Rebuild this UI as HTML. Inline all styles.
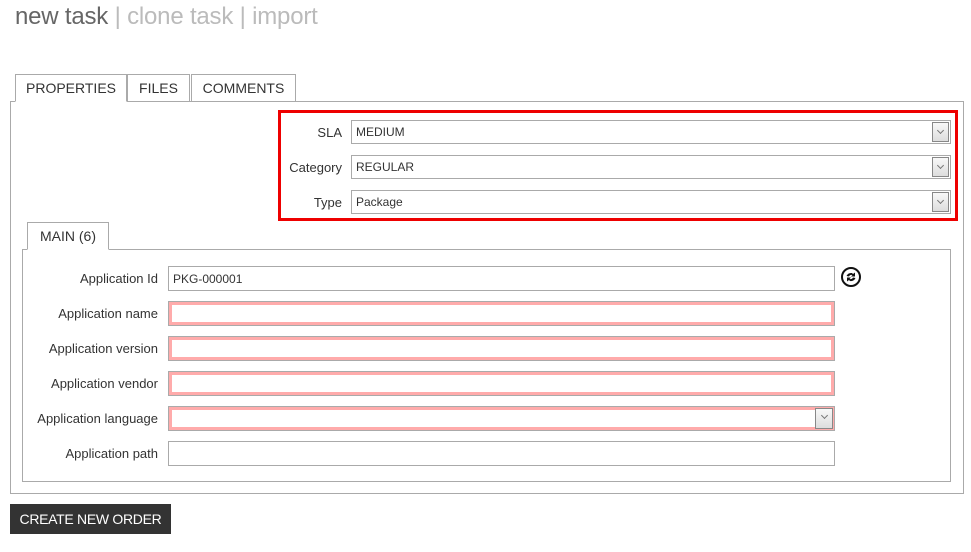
<!DOCTYPE html>
<html><head><style>
*{box-sizing:border-box;margin:0;padding:0}
body{width:971px;height:552px;background:#fff;font-family:"Liberation Sans",sans-serif;position:relative;overflow:hidden;color:#333}
.a{position:absolute}
.title{left:15px;top:3px;font-size:24px;color:#bbb;letter-spacing:-0.2px}
.title b{font-weight:normal;color:#666}
.tab{position:absolute;border:1px solid #aaa;font-size:14px;text-align:center;line-height:26px;background:#fff;color:#333}
.panel{border:1px solid #aaa}
.lbl{position:absolute;font-size:13px;text-align:right;color:#333}
.sel{position:absolute;border:1px solid #aaa;height:24px;font-size:12px;line-height:23px;padding-left:4px;background:#fff}
.sel i{position:absolute;right:1px;top:1px;width:17px;height:20px;border:1px solid #888;background:linear-gradient(#f8f8f8,#ddd)}
.sel i:after{content:"";position:absolute;left:5px;top:5px;width:4px;height:4px;border-right:1px solid #777;border-bottom:1px solid #777;transform:rotate(45deg)}
.inp{position:absolute;border:1px solid #aaa;height:25px;left:168px;width:667px;font-size:12px;line-height:24px;padding-left:4px;background:#fff}
.pk{box-shadow:inset 0 0 0 3px #ffabab}
</style></head><body>
<div class="a title"><b>new task</b> | clone task | import</div>
<div class="a panel" style="left:10px;top:101px;width:954px;height:393px"></div>
<div class="tab" style="left:15px;top:74px;width:112px;height:28px;border-bottom-color:#fff">PROPERTIES</div>
<div class="tab" style="left:127px;top:74px;width:63px;height:28px">FILES</div>
<div class="tab" style="left:191px;top:74px;width:105px;height:28px">COMMENTS</div>
<div class="a" style="left:278px;top:110px;width:680px;height:111px;border:3px solid #e00"></div>
<div class="lbl" style="left:280px;width:62px;top:125px">SLA</div>
<div class="lbl" style="left:280px;width:62px;top:160px">Category</div>
<div class="lbl" style="left:280px;width:62px;top:195px">Type</div>
<div class="sel" style="left:351px;top:120px;width:600px">MEDIUM<i></i></div>
<div class="sel" style="left:351px;top:155px;width:600px">REGULAR<i></i></div>
<div class="sel" style="left:351px;top:190px;width:600px">Package<i></i></div>
<div class="a panel" style="left:22px;top:249px;width:929px;height:233px"></div>
<div class="tab" style="left:27px;top:222px;width:82px;height:28px;border-bottom-color:#fff">MAIN (6)</div>
<div class="lbl" style="left:0px;width:158px;top:271px">Application Id</div>
<div class="lbl" style="left:0px;width:158px;top:306px">Application name</div>
<div class="lbl" style="left:0px;width:158px;top:341px">Application version</div>
<div class="lbl" style="left:0px;width:158px;top:376px">Application vendor</div>
<div class="lbl" style="left:0px;width:158px;top:411px">Application language</div>
<div class="lbl" style="left:0px;width:158px;top:446px">Application path</div>
<div class="inp" style="top:266px">PKG-000001</div>
<div class="inp pk" style="top:301px"></div>
<div class="inp pk" style="top:336px"></div>
<div class="inp pk" style="top:371px"></div>
<div class="inp pk" style="top:406px"><i style="position:absolute;right:1px;top:1px;width:18px;height:21px;border:1px solid #888;background:linear-gradient(#f8f8f8,#ddd)"></i><span style="position:absolute;right:7px;top:6px;width:5px;height:5px;border-right:1px solid #777;border-bottom:1px solid #777;transform:rotate(45deg)"></span></div>
<div class="inp" style="top:441px"></div>
<svg class="a" style="left:840px;top:266px" width="22" height="22" viewBox="0 0 22 22"><circle cx="11" cy="11" r="9" fill="none" stroke="#111" stroke-width="2"/><path d="M6.5 10 Q8 6.5 12 7 L13 8 L15 6.5 L15 10.5 L11 10.5 L12.5 9 Q10 8.5 9 10.5Z M15.5 12 Q14 15.5 10 15 L9 14 L7 15.5 L7 11.5 L11 11.5 L9.5 13 Q12 13.5 13 11.5Z" fill="#111"/></svg>
<div class="a" style="left:10px;top:504px;width:161px;height:30px;background:#333;color:#fff;font-size:14px;line-height:30px;text-align:center;letter-spacing:-0.3px">CREATE NEW ORDER</div>
</body></html>
